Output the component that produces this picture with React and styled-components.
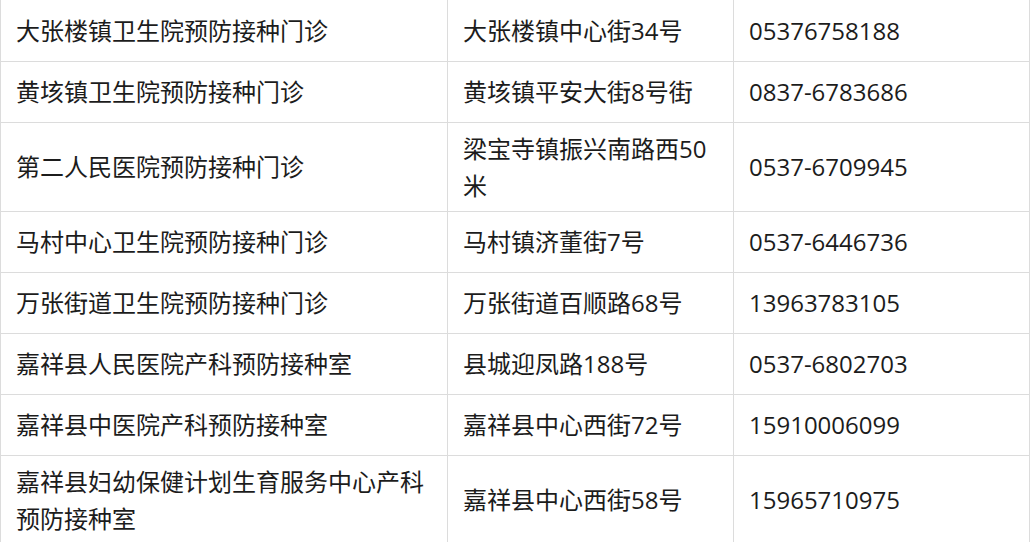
import React from 'react';
import styled, { createGlobalStyle } from 'styled-components';

const GlobalStyle = createGlobalStyle`
  body {
    margin: 0;
    background: #fff;
    font-family: "Open Sans", "Noto Sans CJK SC", sans-serif;
  }
`;

const Table = styled.table`
  width: 1029px;
  border-collapse: collapse;
  table-layout: fixed;
  color: #1c1c1c;
  font-size: 24px;
  line-height: 37px;
`;

const Row = styled.tr`
  &:first-child td {
    border-top: none;
  }
`;

const Cell = styled.td`
  width: ${p => p.w}px;
  height: 61px;
  padding: 7px 15px;
  box-sizing: border-box;
  border: 1px solid #dcdcdc;
  vertical-align: middle;
  word-break: break-all;
`;

const rows = [
  ['大张楼镇卫生院预防接种门诊', '大张楼镇中心街34号', '05376758188'],
  ['黄垓镇卫生院预防接种门诊', '黄垓镇平安大街8号街', '0837-6783686'],
  ['第二人民医院预防接种门诊', '梁宝寺镇振兴南路西50米', '0537-6709945'],
  ['马村中心卫生院预防接种门诊', '马村镇济董街7号', '0537-6446736'],
  ['万张街道卫生院预防接种门诊', '万张街道百顺路68号', '13963783105'],
  ['嘉祥县人民医院产科预防接种室', '县城迎凤路188号', '0537-6802703'],
  ['嘉祥县中医院产科预防接种室', '嘉祥县中心西街72号', '15910006099'],
  ['嘉祥县妇幼保健计划生育服务中心产科预防接种室', '嘉祥县中心西街58号', '15965710975'],
];

const widths = [447, 286, 296];

export default function App() {
  return (
    <>
      <GlobalStyle />
      <Table>
        <tbody>
          {rows.map((r, i) => (
            <Row key={i}>
              {r.map((text, j) => (
                <Cell key={j} w={widths[j]}>{text}</Cell>
              ))}
            </Row>
          ))}
        </tbody>
      </Table>
    </>
  );
}
